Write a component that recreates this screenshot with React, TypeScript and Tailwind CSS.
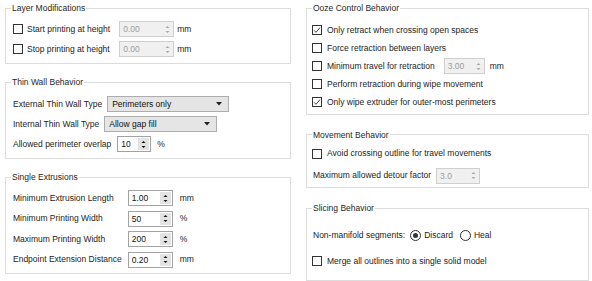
import React from 'react'

function Check({ checked = false }: { checked?: boolean }) {
  return (
    <span className="flex h-[10px] w-[10px] shrink-0 items-center justify-center border border-[#333333] bg-white">
      {checked && (
        <svg width="8" height="8" viewBox="0 0 8 8">
          <path d="M1 4.3 L3 6.3 L7 1.6" stroke="#333333" strokeWidth="0.9" fill="none" />
        </svg>
      )}
    </span>
  )
}

function Radio({ checked = false }: { checked?: boolean }) {
  return (
    <span className="flex h-[11px] w-[11px] shrink-0 items-center justify-center rounded-full border border-[#333333] bg-white">
      {checked && <span className="h-[5px] w-[5px] rounded-full bg-[#333333]" />}
    </span>
  )
}

function Arrows({ disabled }: { disabled?: boolean }) {
  const c = disabled ? '#a8a8a8' : '#111111'
  return (
    <svg width="5" height="9" viewBox="0 0 5 9">
      <path d="M0.5 3 L2.5 1 L4.5 3 Z" fill={c} />
      <path d="M0.5 6 L2.5 8 L4.5 6 Z" fill={c} />
    </svg>
  )
}

function Spin({ value, w, disabled = false }: { value: string; w: string; disabled?: boolean }) {
  return (
    <div
      className={`flex h-4 shrink-0 border ${w} ${
        disabled ? 'border-[#cfcfcf] bg-[#f0f0f0] text-[#9d9d9d]' : 'border-[#a3a3a3] bg-white text-[#111111]'
      }`}
    >
      <span className="flex-1 pl-[3px] leading-[14px]">{value}</span>
      <span
        className={`flex w-[11px] items-center justify-center ${
          disabled ? '' : 'my-[1px] mr-[1px] bg-[#e3e3e3]'
        }`}
      >
        <Arrows disabled={disabled} />
      </span>
    </div>
  )
}

function Combo({ value, w }: { value: string; w: string }) {
  return (
    <div className={`flex h-4 shrink-0 items-center border border-[#adadad] bg-[#e5e5e5] pl-[4px] pr-[6px] ${w}`}>
      <span className="flex-1 leading-[14px] text-[#111111]">{value}</span>
      <svg width="6" height="4" viewBox="0 0 6 4">
        <path d="M0 0 L6 0 L3 3.5 Z" fill="#222222" />
      </svg>
    </div>
  )
}

function Group({ title, h, children }: { title: string; h: string; children: React.ReactNode }) {
  return (
    <fieldset className={`border border-[#dcdcdc] bg-white ${h}`}>
      <legend className="ml-[5px] px-[1px] leading-[10px] text-[#262626]">{title}</legend>
      {children}
    </fieldset>
  )
}

export default function App() {
  return (
    <div className="flex h-[281px] w-[592px] gap-[15px] overflow-hidden bg-white pl-[5px] pt-[3px] font-['Liberation_Sans',Arial,sans-serif] text-[8.5px] text-[#1c1c1c]">
      {/* left column */}
      <div className="flex w-[286px] flex-col gap-[13px]">
        <Group title="Layer Modifications" h="h-[61px]">
          <div className="grid grid-cols-[auto_auto] justify-start gap-x-[9px] gap-y-[4px] pl-[7px] pt-[8px]">
            <div className="flex h-4 items-center gap-[4px]">
              <Check />
              <span>Start printing at height</span>
            </div>
            <div className="flex h-4 items-center gap-[3px]">
              <Spin value="0.00" w="w-[55px]" disabled />
              <span>mm</span>
            </div>
            <div className="flex h-4 items-center gap-[4px]">
              <Check />
              <span>Stop printing at height</span>
            </div>
            <div className="flex h-4 items-center gap-[3px]">
              <Spin value="0.00" w="w-[55px]" disabled />
              <span>mm</span>
            </div>
          </div>
        </Group>

        <Group title="Thin Wall Behavior" h="h-[82px]">
          <div className="flex flex-col gap-[4px] pl-[7px] pt-[9px]">
            <div className="flex h-4 items-center gap-[5px]">
              <span>External Thin Wall Type</span>
              <Combo value="Perimeters only" w="w-[122px]" />
            </div>
            <div className="flex h-4 items-center gap-[5px]">
              <span>Internal Thin Wall Type</span>
              <Combo value="Allow gap fill" w="w-[113px]" />
            </div>
            <div className="flex h-4 items-center gap-[6px]">
              <span>Allowed perimeter overlap</span>
              <Spin value="10" w="w-[34px]" />
              <span>%</span>
            </div>
          </div>
        </Group>

        <Group title="Single Extrusions" h="h-[102px]">
          <div className="grid grid-cols-[auto_auto] justify-start gap-x-[6px] gap-y-[4.5px] pl-[7px] pt-[8px]">
            {[
              ['Minimum Extrusion Length', '1.00', 'mm'],
              ['Minimum Printing Width', '50', '%'],
              ['Maximum Printing Width', '200', '%'],
              ['Endpoint Extension Distance', '0.20', 'mm'],
            ].map(([label, value, unit]) => (
              <React.Fragment key={label}>
                <span className="flex h-4 items-center">{label}</span>
                <div className="flex h-4 items-center gap-[7px]">
                  <Spin value={value} w="w-[45px]" />
                  <span>{unit}</span>
                </div>
              </React.Fragment>
            ))}
          </div>
        </Group>
      </div>

      {/* right column */}
      <div className="flex w-[283px] flex-col gap-[15px]">
        <Group title="Ooze Control Behavior" h="h-[112px]">
          <div className="flex flex-col pl-[5px] pt-[8px]">
            <div className="flex h-[18px] items-center gap-[5px]">
              <Check checked />
              <span>Only retract when crossing open spaces</span>
            </div>
            <div className="flex h-[18px] items-center gap-[5px]">
              <Check />
              <span>Force retraction between layers</span>
            </div>
            <div className="flex h-[18px] items-center gap-[5px]">
              <Check />
              <span>Minimum travel for retraction</span>
              <span className="ml-[4px]">
                <Spin value="3.00" w="w-[41px]" disabled />
              </span>
              <span>mm</span>
            </div>
            <div className="flex h-[18px] items-center gap-[5px]">
              <Check />
              <span>Perform retraction during wipe movement</span>
            </div>
            <div className="flex h-[18px] items-center gap-[5px]">
              <Check checked />
              <span>Only wipe extruder for outer-most perimeters</span>
            </div>
          </div>
        </Group>

        <Group title="Movement Behavior" h="h-[59px]">
          <div className="flex flex-col gap-[4px] pl-[5px] pt-[5px]">
            <div className="flex h-[18px] items-center gap-[5px]">
              <Check />
              <span>Avoid crossing outline for travel movements</span>
            </div>
            <div className="flex h-[18px] items-center gap-[5px] pl-[1px]">
              <span>Maximum allowed detour factor</span>
              <Spin value="3.0" w="w-[44px]" disabled />
            </div>
          </div>
        </Group>

        <Group title="Slicing Behavior" h="h-[78px]">
          <div className="flex flex-col gap-[8px] pl-[5px] pt-[13px]">
            <div className="flex h-[18px] items-center pl-[1px]">
              <span className="mr-[5px]">Non-manifold segments:</span>
              <Radio checked />
              <span className="ml-[3px] mr-[7px]">Discard</span>
              <Radio />
              <span className="ml-[3px]">Heal</span>
            </div>
            <div className="flex h-[18px] items-center gap-[5px]">
              <Check />
              <span>Merge all outlines into a single solid model</span>
            </div>
          </div>
        </Group>
      </div>
    </div>
  )
}
